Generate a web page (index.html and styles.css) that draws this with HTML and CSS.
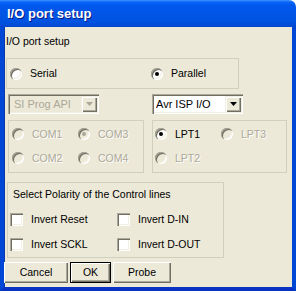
FILE: index.html
```html
<!DOCTYPE html>
<html>
<head>
<meta charset="utf-8">
<link rel="stylesheet" href="styles.css">
</head>
<body>
<div class="window">
  <div class="titlebar"><span class="title">I/O port setup</span></div>
  <div class="client">
    <div class="top-label">I/O port setup</div>
    <div class="group g-mode">
      <div class="opt"><span class="radio"></span><span>Serial</span></div>
      <div class="opt"><span class="radio checked"></span><span>Parallel</span></div>
    </div>
    <div class="combos">
      <div class="combo disabled">
        <span class="combo-text">SI Prog API</span>
        <span class="combo-btn"><svg width="7" height="4" viewBox="0 0 7 4"><path d="M0 0h7L3.5 4z" fill="currentColor"/></svg></span>
      </div>
      <div class="combo">
        <span class="combo-text">Avr ISP I/O</span>
        <span class="combo-btn"><svg width="7" height="4" viewBox="0 0 7 4"><path d="M0 0h7L3.5 4z" fill="currentColor"/></svg></span>
      </div>
    </div>
    <div class="ports">
      <div class="group g-port g-com">
        <div class="opt dis"><span class="radio"></span><span>COM1</span></div>
        <div class="opt dis"><span class="radio checked"></span><span>COM3</span></div>
        <div class="opt dis"><span class="radio"></span><span>COM2</span></div>
        <div class="opt dis"><span class="radio"></span><span>COM4</span></div>
      </div>
      <div class="group g-port g-lpt">
        <div class="opt"><span class="radio checked"></span><span>LPT1</span></div>
        <div class="opt dis"><span class="radio"></span><span>LPT3</span></div>
        <div class="opt dis"><span class="radio"></span><span>LPT2</span></div>
      </div>
    </div>
    <div class="group g-pol">
      <div class="pol-title">Select Polarity of the Control lines</div>
      <div class="checks">
        <div class="opt"><span class="check"></span><span>Invert Reset</span></div>
        <div class="opt"><span class="check"></span><span>Invert D-IN</span></div>
        <div class="opt"><span class="check"></span><span>Invert SCKL</span></div>
        <div class="opt"><span class="check"></span><span>Invert D-OUT</span></div>
      </div>
    </div>
    <div class="buttons">
      <div class="btn b-cancel">Cancel</div>
      <div class="btn b-ok">OK</div>
      <div class="btn b-probe">Probe</div>
    </div>
  </div>
</div>
</body>
</html>
```

FILE: styles.css
```css
html, body {
  margin: 0;
  padding: 0;
  background: #fff;
}
body {
  width: 299px;
  height: 293px;
  overflow: hidden;
  font-family: "Liberation Sans", Arial, sans-serif;
  font-size: 10.5px;
  color: #000;
}
.window {
  width: 296px;
  height: 291px;
  display: flex;
  flex-direction: column;
}
.titlebar {
  height: 27px;
  flex: none;
  border-top-right-radius: 7px;
  background: linear-gradient(to bottom, #3d95ff 0px, #0a66f7 2px, #0058ee 5px, #0055e5 14px, #0053e0 22px, #0046cf 27px);
  box-sizing: border-box;
  padding: 6px 0 0 7px;
}
.title {
  font-family: "Liberation Sans", Arial, sans-serif;
  font-weight: bold;
  font-size: 13px;
  line-height: 16px;
  color: #fff;
  text-shadow: 1px 1px 0 #0a1883;
}
.client {
  flex: 1;
  background: #ece9d8;
  border-left: 4px solid #0047d6;
  border-right: 4px solid #0047d6;
  border-bottom: 4px solid #0a33c4;
  box-shadow: inset 1px 0 0 #0838b0;
  display: flex;
  flex-direction: column;
  align-items: flex-start;
}
.top-label {
  margin: 8px 0 0 2px;
  line-height: 13px;
}
.group {
  border: 1px solid #d0d0bf;
  box-sizing: border-box;
}
.g-mode {
  margin: 10px 0 0 2px;
  width: 233px;
  height: 31px;
  display: grid;
  grid-template-columns: 141px 1fr;
  align-items: center;
  padding-left: 3px;
}
.opt {
  display: flex;
  align-items: center;
  gap: 8px;
  line-height: 13px;
  white-space: nowrap;
}
.radio {
  width: 12px;
  height: 12px;
  flex: none;
  border-radius: 50%;
  background: #fff;
  position: relative;
  box-shadow: inset 1px 1px 0 #aca899, inset 2px 2px 0 #716f64, inset -1px -1px 0 #fff, inset -2px -2px 0 #f1efe2;
}
.radio.checked::after {
  content: "";
  position: absolute;
  left: 4px;
  top: 4px;
  width: 4px;
  height: 4px;
  border-radius: 50%;
  background: #000;
}
.dis .radio {
  background: #ece9d8;
}
.dis .radio.checked::after {
  background: #aca899;
}
.dis span:last-child {
  color: #aca899;
  text-shadow: 1px 1px 0 #fff;
}
.combos {
  display: flex;
  gap: 53px;
  margin: 5px 0 0 4px;
}
.combo {
  width: 91px;
  height: 20px;
  box-sizing: border-box;
  background: #fff;
  box-shadow: inset 1px 1px 0 #aca899, inset 2px 2px 0 #716f64, inset -1px -1px 0 #fff, inset -2px -2px 0 #f1efe2;
  display: flex;
  align-items: center;
  justify-content: space-between;
  padding: 2px;
}
.combo.disabled {
  background: #ece9d8;
}
.combo-text {
  padding-left: 2px;
  font-size: 11px;
  line-height: 13px;
}
.disabled .combo-text {
  color: #aca899;
  padding-left: 4px;
}
.combo-btn {
  width: 16px;
  height: 16px;
  box-sizing: border-box;
  background: #ece9d8;
  box-shadow: inset 1px 1px 0 #f1efe2, inset 2px 2px 0 #fff, inset -1px -1px 0 #716f64, inset -2px -2px 0 #aca899;
  display: flex;
  align-items: center;
  justify-content: center;
  color: #000;
}
.disabled .combo-btn {
  color: #aca899;
}
.ports {
  display: flex;
  gap: 8px;
  margin: 6px 0 0 4px;
}
.g-port {
  height: 53px;
  display: grid;
  grid-template-columns: 66px 1fr;
  grid-auto-rows: 24px;
  align-items: center;
  align-content: start;
  padding: 1px 0 0 3px;
}
.g-com {
  width: 136px;
}
.g-lpt {
  width: 135px;
  padding-left: 2px;
}
.g-pol {
  margin: 9px 0 0 3px;
  width: 217px;
  height: 76px;
  padding: 5px 0 0 2px;
}
.pol-title {
  padding-left: 3px;
  line-height: 13px;
}
.checks {
  margin-top: 12px;
  display: grid;
  grid-template-columns: 107px 1fr;
  grid-auto-rows: 25px;
  align-items: start;
}
.check {
  width: 13px;
  height: 13px;
  flex: none;
  background: #fff;
  box-shadow: inset 1px 1px 0 #aca899, inset 2px 2px 0 #716f64, inset -1px -1px 0 #fff, inset -2px -2px 0 #f1efe2;
}
.buttons {
  display: flex;
  gap: 2px;
  margin: 4px 0 0 0;
}
.btn {
  height: 21px;
  box-sizing: border-box;
  background: #ece9d8;
  box-shadow: inset 1px 1px 0 #fff, inset -1px -1px 0 #716f64, inset -2px -2px 0 #aca899;
  display: flex;
  align-items: center;
  justify-content: center;
  line-height: 13px;
}
.b-cancel { width: 64px; }
.b-ok {
  width: 41px;
  box-shadow: inset 0 0 0 1px #000, inset 2px 2px 0 #fff, inset -2px -2px 0 #716f64, inset -3px -3px 0 #aca899;
}
.b-probe { width: 58px; }
```
